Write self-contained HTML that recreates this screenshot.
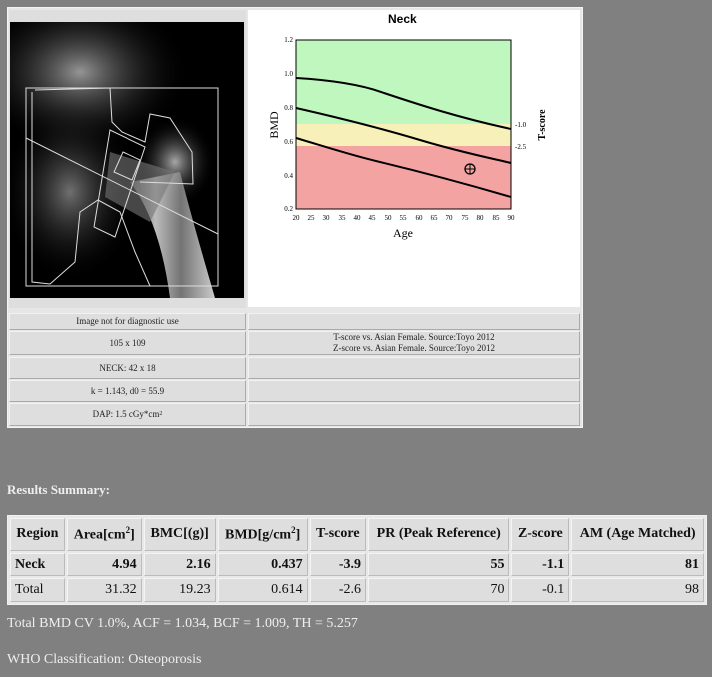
<!DOCTYPE html>
<html><head><meta charset="utf-8"><style>
body{margin:0;width:712px;height:677px;background:#808080;font-family:"Liberation Serif",serif;position:relative;overflow:hidden}
.a{position:absolute}
.c{position:absolute;background:#dedede;border:1px solid #f2f2f2;border-right-color:#aaa;border-bottom-color:#aaa;box-sizing:border-box;font-size:9px;color:#222;display:flex;align-items:center;justify-content:center;text-align:center;line-height:11px}
table{position:absolute;left:7px;top:515px;width:700px;height:90px;background:#e8e8e8;border-collapse:separate;border-spacing:2px;border:1px solid #f0f0f0}
td{background:#dedede;border:1px solid #bbb;border-top-color:#f4f4f4;border-left-color:#f4f4f4;font-size:14px;color:#111;padding:0 4px;text-align:right;white-space:nowrap;height:21px}
tr.h td{font-weight:bold;text-align:center;height:30px}
tr.b td{font-weight:bold}
td.l{text-align:left}
.t{color:#eee;font-size:13px}
</style></head><body>
<div class="a" style="left:7px;top:7px;width:576px;height:421px;background:#e6e6e6;border:1px solid #f4f4f4;box-sizing:border-box"></div>
<div class="a" style="left:9px;top:10px;width:237px;height:298px;background:#dedede"></div>
<svg class="a" style="left:10px;top:22px" width="234" height="276" viewBox="0 0 234 276">
<defs><radialGradient id="g1" cx="0.5" cy="0.5" r="0.5"><stop offset="0" stop-color="#bbb"/><stop offset="1" stop-color="#000" stop-opacity="0"/></radialGradient>
<linearGradient id="sh" x1="0" x2="1"><stop offset="0" stop-color="#666"/><stop offset="0.3" stop-color="#ddd"/><stop offset="0.6" stop-color="#888"/><stop offset="1" stop-color="#eee"/></linearGradient></defs>
<rect width="234" height="276" fill="#000"/>
<ellipse cx="70" cy="50" rx="110" ry="80" fill="url(#g1)" opacity=".8"/>
<ellipse cx="60" cy="170" rx="70" ry="90" fill="url(#g1)" opacity=".6"/>
<ellipse cx="165" cy="140" rx="40" ry="45" fill="url(#g1)" opacity=".9"/>
<path d="M120 160 Q150 200 160 276 L205 276 Q180 190 170 150 Z" fill="url(#sh)" opacity=".85"/>
<path d="M100 130 L165 150 L140 200 L95 175 Z" fill="#777" opacity=".6"/>
<g fill="none" stroke="#ddd" stroke-width="1">
<rect x="16" y="66" width="192" height="198"/>
<line x1="16" y1="116" x2="208" y2="212"/>
<path d="M25 68 L100 66 L102 100 L112 110 L135 120 L140 92 L160 96 L182 130 L183 162 L130 160"/>
<path d="M100 108 L135 125 L105 215 L84 205 Z"/>
<path d="M113 130 L130 138 L122 158 L104 150 Z"/>
<path d="M22 70 L22 260 L40 262 L65 240 L70 190 L88 178 L110 190 L125 230 L140 264"/>
</g></svg>
<div class="a" style="left:248px;top:10px;width:332px;height:297px;background:#fff"></div>
<div class="a" style="left:388px;top:12px;font:bold 12px 'Liberation Sans',sans-serif">Neck</div>
<svg class="a" style="left:248px;top:10px" width="332" height="297" viewBox="248 10 332 297">
<rect x="296" y="40" width="215" height="84" fill="#bff7bf"/>
<rect x="296" y="124" width="215" height="22" fill="#f7f0b8"/>
<rect x="296" y="146" width="215" height="63" fill="#f4a3a3"/>
<rect x="296" y="40" width="215" height="169" fill="none" stroke="#000"/>
<g fill="none" stroke="#000" stroke-width="2">
<path d="M296 78 C330 80 360 84 384 93 C420 105 460 118 511 129"/>
<path d="M296 108 C340 118 380 128 420 140 C460 152 490 158 511 163"/>
<path d="M296 138 C320 145 350 155 380 162 C430 174 470 185 511 197"/>
</g>
<circle cx="470" cy="169" r="5" fill="none" stroke="#000" stroke-width="1.3"/>
<path d="M465 169h10M470 164v10" stroke="#000"/>
<g font-family="Liberation Serif,serif" font-size="7" text-anchor="end">
<text x="293" y="42">1.2</text><text x="293" y="76">1.0</text><text x="293" y="110">0.8</text><text x="293" y="144">0.6</text><text x="293" y="178">0.4</text><text x="293" y="211">0.2</text></g>
<g font-family="Liberation Serif,serif" font-size="7" text-anchor="middle">
<text x="296" y="220">20</text><text x="311" y="220">25</text><text x="326" y="220">30</text><text x="342" y="220">35</text><text x="357" y="220">40</text><text x="372" y="220">45</text><text x="388" y="220">50</text><text x="403" y="220">55</text><text x="419" y="220">60</text><text x="434" y="220">65</text><text x="449" y="220">70</text><text x="465" y="220">75</text><text x="480" y="220">80</text><text x="496" y="220">85</text><text x="511" y="220">90</text></g>
<text x="515" y="127" font-size="7" font-family="Liberation Serif,serif">-1.0</text>
<text x="515" y="149" font-size="7" font-family="Liberation Serif,serif">-2.5</text>
<text x="403" y="237" font-size="12" font-family="Liberation Serif,serif" text-anchor="middle">Age</text>
<text transform="translate(278,125) rotate(-90)" font-size="12" text-anchor="middle">BMD</text>
<text transform="translate(545,125) rotate(-90)" font-size="10" font-weight="bold" text-anchor="middle">T-score</text>
</svg>
<div class="c" style="left:9px;top:313px;width:237px;height:17px">Image not for diagnostic use</div>
<div class="c" style="left:248px;top:313px;width:332px;height:17px"></div>
<div class="c" style="left:9px;top:331px;width:237px;height:24px">105 x 109</div>
<div class="c" style="left:248px;top:331px;width:332px;height:24px">T-score vs. Asian Female. Source:Toyo 2012<br>Z-score vs. Asian Female. Source:Toyo 2012</div>
<div class="c" style="left:9px;top:357px;width:237px;height:22px">NECK: 42 x 18</div>
<div class="c" style="left:248px;top:357px;width:332px;height:22px"></div>
<div class="c" style="left:9px;top:380px;width:237px;height:22px">k = 1.143, d0 = 55.9</div>
<div class="c" style="left:248px;top:380px;width:332px;height:22px"></div>
<div class="c" style="left:9px;top:403px;width:237px;height:23px">DAP: 1.5 cGy*cm<sup style="font-size:6px">2</sup></div>
<div class="c" style="left:248px;top:403px;width:332px;height:23px"></div>
<div class="a t" style="left:7px;top:482px;font-weight:bold">Results Summary:</div>
<table>
<tr class="h"><td>Region</td><td>Area[cm<sup style="font-size:9px">2</sup>]</td><td>BMC[(g)]</td><td>BMD[g/cm<sup style="font-size:9px">2</sup>]</td><td>T-score</td><td>PR (Peak Reference)</td><td>Z-score</td><td>AM (Age Matched)</td></tr>
<tr class="b"><td class="l">Neck</td><td>4.94</td><td>2.16</td><td>0.437</td><td>-3.9</td><td>55</td><td>-1.1</td><td>81</td></tr>
<tr><td class="l">Total</td><td>31.32</td><td>19.23</td><td>0.614</td><td>-2.6</td><td>70</td><td>-0.1</td><td>98</td></tr>
</table>
<div class="a t" style="left:7px;top:616px;font-size:14px">Total BMD CV 1.0%, ACF = 1.034, BCF = 1.009, TH = 5.257</div>
<div class="a t" style="left:7px;top:652px;font-size:14px">WHO Classification: Osteoporosis</div>
</body></html>
